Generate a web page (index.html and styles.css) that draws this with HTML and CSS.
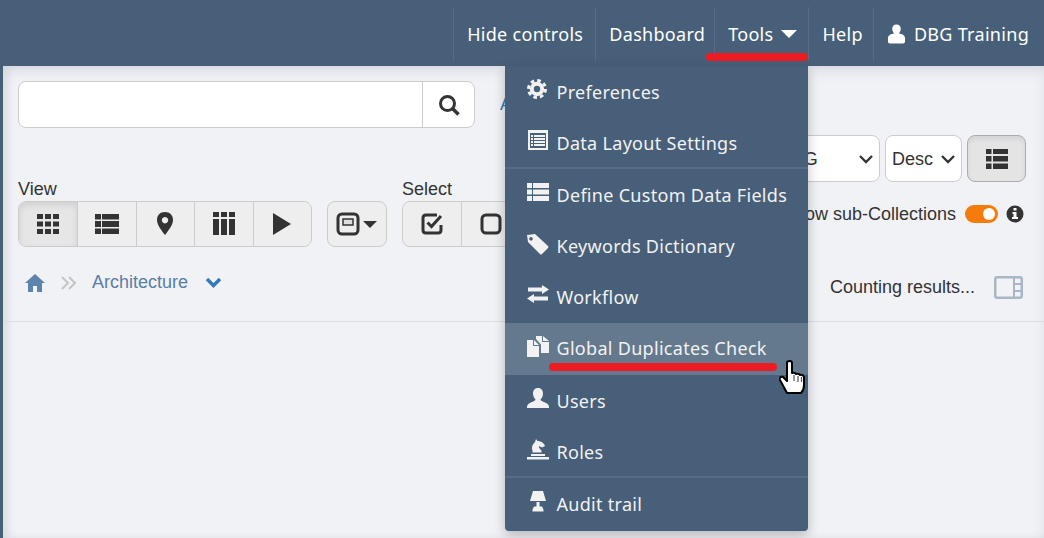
FILE: index.html
```html
<!DOCTYPE html>
<html lang="en">
<head>
    <meta charset="UTF-8">
    <meta name="viewport" content="width=device-width, initial-scale=1.0">
    <title>Tools menu</title>
    <link rel="stylesheet" href="styles.css">
</head>
<body>
    <header class="topbar">
        <nav class="nav">
            <a class="nav-item nav-hide">Hide controls</a>
            <a class="nav-item nav-dash">Dashboard</a>
            <div class="nav-item nav-tools">
                Tools <span class="caret"></span>
                <ul class="menu">
                    <li class="menu-item">
                        <svg class="menu-icon" viewBox="0 0 22 22"><circle cx="10" cy="10" r="5.2" fill="none" stroke="#f2f2f2" stroke-width="4"/><circle cx="10" cy="10" r="8.5" fill="none" stroke="#f2f2f2" stroke-width="3" stroke-dasharray="3.6 3.07"/></svg>
                        Preferences
                    </li>
                    <li class="menu-item">
                        <svg class="menu-icon" viewBox="0 0 22 22"><path fill="#f2f2f2" fill-rule="evenodd" d="M1 0h20v20H1zM3 3v15h16V3z"/><path fill="#f2f2f2" d="M4 5h2v2H4zM7 5h11v2H7zM4 8h2v2H4zM7 8h11v2H7zM4 11h2v2H4zM7 11h11v2H7zM4 14h2v2H4zM7 14h11v2H7z"/></svg>
                        Data Layout Settings
                    </li>
                    <li class="menu-sep"></li>
                    <li class="menu-item">
                        <svg class="menu-icon" viewBox="0 0 22 22"><path fill="#f2f2f2" d="M0 1h5v5H0zM6 1h16v5H6zM0 7.500h5v5H0zM6 7.500h16v5H6zM0 14h5v5H0zM6 14h16v5H6z"/></svg>
                        Define Custom Data Fields
                    </li>
                    <li class="menu-item">
                        <svg class="menu-icon" viewBox="0 0 22 22"><path fill="#f2f2f2" fill-rule="evenodd" d="M0 2l8 -1 13 12q1 1 0 2l-6 6q-1 1-2 0L1 9zM4 4a1.800 1.800 0 1 0 0.010 0z"/></svg>
                        Keywords Dictionary
                    </li>
                    <li class="menu-item">
                        <svg class="menu-icon" viewBox="0 0 22 22"><path fill="#f2f2f2" d="M15 1l7 4.500-7 4.500V7.500H1v-4h14zM7 10v2.500h14v4H7V19l-7-4.500z"/></svg>
                        Workflow
                    </li>
                    <li class="menu-item is-hover">
                        <svg class="menu-icon" viewBox="0 0 22 22"><path fill="#f2f2f2" d="M0 4h6v6h6v11H0zM7 4l5 5H7zM9 0h6v6h7v11h-8V8.500L9 3zM16 0l6 5h-6z"/></svg>
                        Global Duplicates Check
                        <span class="mark"></span>
                        <svg class="hand" viewBox="0 0 27 34"><path fill="#fff" stroke="#000" stroke-width="2" stroke-linejoin="round" d="M8 3q0-2 2.500-2t2.500 2v10q3-1 4 1 3-1 4 1 3-1 4 2v8q0 5-3 8H8L1 20q-1-2 1-3t3 1l3 3z"/><path stroke="#555" stroke-width="1.200" d="M15 15v6M19 16v6M22.500 17v5"/></svg>
                    </li>
                    <li class="menu-item">
                        <svg class="menu-icon" viewBox="0 0 22 22"><path fill="#f2f2f2" d="M11 0c3.500 0 5 2.500 5 5.500 0 3-1.500 5-2.500 6 0 1.500 3 2 5.500 3.500 2 1 3 2 3 4v1H0v-1c0-2 1-3 3-4 2.500-1.500 5.500-2 5.500-3.500-1-1-2.500-3-2.500-6C6 2.500 7.500 0 11 0z"/></svg>
                        Users
                    </li>
                    <li class="menu-item">
                        <svg class="menu-icon" viewBox="0 0 22 22"><path fill="#f2f2f2" d="M9 0l1.500 2c3 0 6.500 1.500 7.500 5l-3 1.500L12 7c-.5 1.500 1 3 2.500 4.500v2h-9v-2c-1-2-.5-3.500 0-5C6 5 7.500 4 8 3zM4 15h14v2H4zM0 18h22v2.500H0z"/></svg>
                        Roles
                    </li>
                    <li class="menu-sep"></li>
                    <li class="menu-item">
                        <svg class="menu-icon" viewBox="0 0 22 22"><path fill="#f2f2f2" d="M6 0h10l3 10H3zM9.500 11h3v5h-3zM7 15.500h8l1.500 3v2h-11v-2z"/></svg>
                        Audit trail
                    </li>
                </ul>
            </div>
            <a class="nav-item nav-help">Help</a>
            <a class="nav-item nav-user">
                <svg class="user-icon" viewBox="0 0 20 20"><path fill="#fff" d="M10 0c3 0 4.500 2 4.500 4.500S13 9 12.500 9.500c3 .5 6.500 1.500 6.500 5V18q0 2-2 2H3q-2 0-2-2v-3.500c0-3.500 3.500-4.500 6.500-5C7 9 5.500 7 5.500 4.500S7 0 10 0z"/></svg>
                DBG Training
            </a>
        </nav>
    </header>

    <main class="content">
        <div class="toolbar">
            <div class="tools-left">
                <div class="search-row">
                    <div class="search">
                        <input class="search-input" type="text">
                        <button class="search-btn">
                            <svg width="22" height="22" viewBox="0 0 22 22"><circle cx="9.500" cy="9.500" r="7" fill="none" stroke="#333" stroke-width="3"/><path d="M14.500 14.500l6 6" stroke="#333" stroke-width="3.500"/></svg>
                        </button>
                    </div>
                    <a class="link">A</a>
                </div>
                <div class="controls">
                    <div class="control">
                        <label>View</label>
                        <div class="btn-group">
                            <button class="btn is-active"><svg width="22" height="22" viewBox="0 0 22 22"><path fill="#333" d="M0 1h6v5H0zM8 1h6v5H8zM16 1h6v5h-6zM0 8.500h6v5H0zM8 8.500h6v5H8zM16 8.500h6v5h-6zM0 16h6v5H0zM8 16h6v5H8zM16 16h6v5h-6z"/></svg></button>
                            <button class="btn"><svg width="24" height="22" viewBox="0 0 24 22"><path fill="#333" d="M0 1h6v5.500H0zM7 1h17v5.500H7zM0 8h6v6H0zM7 8h17v6H7zM0 15.500h6V21H0zM7 15.500h17V21H7z"/></svg></button>
                            <button class="btn"><svg width="18" height="24" viewBox="0 0 18 24"><path fill="#333" fill-rule="evenodd" d="M9 0c5 0 8 3.500 8 8 0 5-5 11-8 15-3-4-8-10-8-15 0-4.500 3-8 8-8zM9 5a3.200 3.200 0 1 0 .01 0z"/></svg></button>
                            <button class="btn"><svg width="22" height="24" viewBox="0 0 22 24"><path fill="#333" d="M0 0h6v5H0zM8 0h6v5H8zM16 0h6v5h-6zM0 7h6v16H0zM8 7h6v16H8zM16 7h6v16h-6z"/></svg></button>
                            <button class="btn"><svg width="18" height="22" viewBox="0 0 18 22"><path fill="#333" d="M0 0l18 11L0 22z"/></svg></button>
                        </div>
                    </div>
                    <div class="control">
                        <label>&nbsp;</label>
                        <button class="btn btn-single">
                            <svg width="24" height="24" viewBox="0 0 24 24"><rect x="2" y="2" width="20" height="20" rx="4" fill="none" stroke="#333" stroke-width="3"/><rect x="7" y="7" width="10" height="6" fill="#ddd" stroke="#333" stroke-width="1.500"/></svg>
                            <span class="btn-caret"></span>
                        </button>
                    </div>
                    <div class="control">
                        <label>Select</label>
                        <div class="btn-group">
                            <button class="btn"><svg width="22" height="22" viewBox="0 0 22 22"><path fill="none" stroke="#333" stroke-width="3" d="M20 12v5q0 3-3 3H5q-3 0-3-3V5q0-3 3-3h11"/><path fill="none" stroke="#333" stroke-width="3" d="M6.500 9.500l4 4 9.500-10.500"/></svg></button>
                            <button class="btn"><svg width="22" height="22" viewBox="0 0 22 22"><rect x="2" y="2" width="18" height="18" rx="4" fill="none" stroke="#333" stroke-width="3"/></svg></button>
                            <button class="btn"></button>
                        </div>
                    </div>
                </div>
            </div>
            <div class="tools-right">
                <div class="sort-row">
                    <div class="select select-field">SORTING<svg class="chevron" viewBox="0 0 14 9"><path fill="none" stroke="#333" stroke-width="2.300" d="M1 1l6 6 6-6"/></svg></div>
                    <div class="select select-dir">Desc<svg class="chevron" viewBox="0 0 14 9"><path fill="none" stroke="#333" stroke-width="2.300" d="M1 1l6 6 6-6"/></svg></div>
                    <button class="btn btn-list"><svg width="22" height="20" viewBox="0 0 22 20"><path fill="#333" d="M0 0h5.500v5H0zM7 0h15v5H7zM0 7h5.500v5.500H0zM7 7h15v5.500H7zM0 14.500h5.500V20H0zM7 14.500h15V20H7z"/></svg></button>
                </div>
                <div class="toggle-row">
                    <span>Show sub-Collections</span>
                    <span class="toggle"></span>
                    <svg class="info" viewBox="0 0 18 18"><circle cx="9" cy="9" r="8.500" fill="#333"/><path fill="#fff" d="M7.500 3h3v2.500h-3zM6.500 7h4v5h1.500v2H6v-2h1.500V9h-1z"/></svg>
                </div>
            </div>
        </div>
        <div class="crumbs">
            <div class="crumb-left">
                <svg width="20" height="19" viewBox="0 0 20 19"><path fill="#5c84ad" d="M10 1l10 9h-3v9h-5v-6H8v6H3v-9H0z"/></svg>
                <svg class="crumb-sep" width="15" height="14" viewBox="0 0 15 14"><path fill="none" stroke="#c4c4c4" stroke-width="2" d="M1 1l6 6-6 6M8 1l6 6-6 6"/></svg>
                <a class="crumb-link">Architecture</a>
                <svg class="crumb-chevron" width="17" height="11" viewBox="0 0 16 11"><path fill="none" stroke="#337ab7" stroke-width="3.500" d="M1.500 2l6.500 6.500L14.500 2"/></svg>
            </div>
            <div class="crumb-right">
                <span>Counting results...</span>
                <svg width="29" height="23" viewBox="0 0 29 23"><rect x="1.250" y="1.250" width="26.500" height="20.500" rx="2" fill="none" stroke="#a9b6c6" stroke-width="2.500"/><path stroke="#a9b6c6" stroke-width="2" d="M20 1v21M20 8h8M20 15h8"/></svg>
            </div>
        </div>
    </main>
</body>
</html>
```

FILE: styles.css
```css
html, body {
    height: 100%;
}
body {
    margin: 0;
    background: #475f78;
    font-family: "Liberation Sans", Arial, sans-serif;
    font-size: 18px;
    color: #333;
    overflow: hidden;
}
/* Barra superior */
.topbar {
    height: 66px;
    display: flex;
    justify-content: flex-end;
    background: #475f78;
    font-family: "Noto Sans", sans-serif;
    letter-spacing: 0.3px;
    color: #fff;
}
.nav {
    display: flex;
    align-items: center;
    padding-right: 15px;
}
.nav-item {
    position: relative;
    display: flex;
    align-items: center;
    height: 54px;
    margin-top: 2px;
    padding: 0 11px 0 13px;
    border-left: 1px solid #566d85;
    white-space: nowrap;
}
.nav-hide {
    padding-right: 12px;
}
.nav-dash {
    padding-right: 9px;
}
.nav-help {
    padding-right: 10px;
}
.caret {
    width: 0;
    height: 0;
    margin-left: 8px;
    border-left: 8px solid transparent;
    border-right: 8px solid transparent;
    border-top: 8px solid #fff;
}
.nav-tools::after {
    content: "";
    position: absolute;
    left: -9px;
    right: 0;
    top: 46px;
    height: 8px;
    border-radius: 4px;
    background: #ed1c24;
}
.nav-user {
    padding-right: 0;
}
.user-icon {
    width: 19px;
    height: 20px;
    margin-right: 8px;
}
/* Menu desplegable */
.menu {
    position: absolute;
    top: 59px;
    right: 0;
    z-index: 5;
    width: 303px;
    margin: 0;
    padding: 0 0 2px;
    list-style: none;
    background: #475f78;
    border-radius: 0 0 4px 4px;
    box-shadow: 0 4px 12px rgba(0, 0, 0, 0.25);
    color: #f2f2f2;
}
.menu-item {
    position: relative;
    display: flex;
    align-items: center;
    height: 51px;
    padding-left: 51px;
    white-space: nowrap;
}
.menu-icon {
    position: absolute;
    left: 22px;
    top: 13px;
    width: 22px;
    height: 22px;
}
.menu-sep {
    height: 2px;
    margin-top: -1px;
    background: #566d85;
}
.is-hover {
    box-sizing: border-box;
    height: 52px;
    margin-top: 1px;
    padding-bottom: 3px;
    background: #64798d;
}
.mark {
    position: absolute;
    left: 44px;
    top: 40px;
    width: 228px;
    height: 8px;
    border-radius: 4px;
    background: #ed1c24;
}
.hand {
    position: absolute;
    left: 274px;
    top: 37px;
    width: 27px;
    height: 34px;
    z-index: 1;
}
/* Contenido */
.content {
    height: calc(100vh - 66px);
    margin-left: 3px;
    background: #f1f2f6;
    box-shadow: inset 0 6px 12px rgba(71, 95, 120, 0.12), inset 6px 0 8px rgba(0, 0, 0, 0.05);
}
.toolbar {
    display: flex;
    justify-content: space-between;
    padding: 15px 18px 0 15px;
}
.search-row {
    display: flex;
    align-items: center;
}
.search {
    display: flex;
    width: 457px;
    height: 47px;
    box-sizing: border-box;
    background: #fff;
    border: 1px solid #ccc;
    border-radius: 8px;
}
.search-input {
    flex: 1;
    min-width: 0;
    border: 0;
    background: none;
}
.search-btn {
    width: 52px;
    border: 0;
    border-left: 1px solid #ccc;
    background: none;
    display: flex;
    align-items: center;
    justify-content: center;
}
.link {
    margin-left: 25px;
    color: #337ab7;
}
.controls {
    display: flex;
    gap: 15px;
    margin-top: 50px;
}
.control label {
    display: block;
    height: 23px;
    line-height: 22px;
}
.btn-group {
    display: flex;
    height: 46px;
    box-sizing: border-box;
    border: 1px solid #ccc;
    border-radius: 8px;
    background: #eee;
}
.btn {
    width: 58.400px;
    padding: 0;
    border: 0;
    background: #eee;
    display: flex;
    align-items: center;
    justify-content: center;
}
.btn-group .btn {
    border-left: 1px solid #ccc;
    border-radius: 0;
}
.btn-group .btn:first-child {
    border-left: 0;
    border-radius: 8px 0 0 8px;
}
.btn-group .btn:last-child {
    border-radius: 0 8px 8px 0;
}
.is-active {
    background: #e6e6e6 !important;
    box-shadow: inset 0 3px 6px rgba(0, 0, 0, 0.1);
}
.btn-single {
    width: 60px;
    height: 46px;
    box-sizing: border-box;
    border: 1px solid #ccc;
    border-radius: 8px;
    gap: 3px;
}
.btn-caret {
    width: 0;
    height: 0;
    border-left: 7px solid transparent;
    border-right: 7px solid transparent;
    border-top: 7px solid #333;
}
.tools-right {
    padding-top: 54px;
}
.sort-row {
    display: flex;
    gap: 5px;
    height: 47px;
}
.select {
    display: flex;
    align-items: center;
    justify-content: space-between;
    height: 47px;
    box-sizing: border-box;
    padding: 1px 6px 0 6px;
    background: #fff;
    border: 1px solid #ccc;
    border-radius: 8px;
}
.select-field {
    width: 152px;
    padding-left: 7px;
}
.select-dir {
    width: 77px;
}
.chevron {
    width: 14px;
    height: 9px;
}
.btn-list {
    width: 59px;
    height: 47px;
    box-sizing: border-box;
    background: #e4e4e4;
    border: 1px solid #adadad;
    border-radius: 8px;
    box-shadow: inset 0 3px 5px rgba(0, 0, 0, 0.08);
}
.toggle-row {
    display: flex;
    align-items: center;
    justify-content: flex-end;
    height: 18px;
    margin-top: 23px;
    margin-right: 2px;
}
.toggle {
    position: relative;
    width: 33px;
    height: 18px;
    margin-left: 9px;
    border-radius: 9px;
    background: #f57c0a;
}
.toggle::after {
    content: "";
    position: absolute;
    right: 3px;
    top: 3px;
    width: 12px;
    height: 12px;
    border-radius: 50%;
    background: #fff;
}
.info {
    width: 18px;
    height: 18px;
    margin-left: 8px;
}
.crumbs {
    display: flex;
    justify-content: space-between;
    align-items: center;
    height: 74px;
    padding: 0 21px 0 22px;
    border-bottom: 1px solid #dcdde1;
}
.crumb-left {
    display: flex;
    align-items: center;
    gap: 10px;
    margin-top: -3px;
}
.crumb-sep {
    margin-left: 6px;
}
.crumb-link {
    margin-left: 6px;
    color: #5a7ea6;
}
.crumb-chevron {
    margin-left: 7px;
}
.crumb-right {
    display: flex;
    align-items: center;
    gap: 19px;
    margin-top: 7px;
}
```
